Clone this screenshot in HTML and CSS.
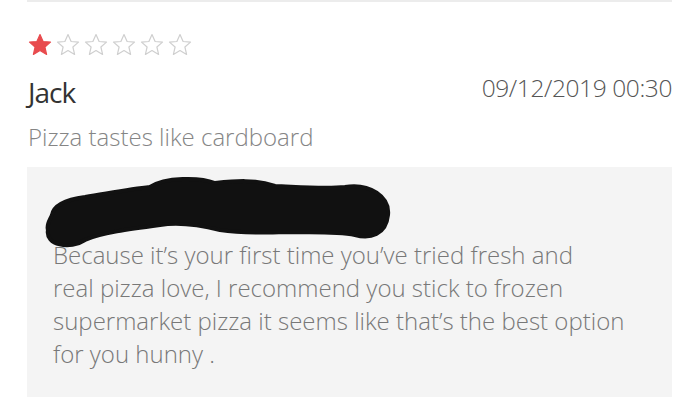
FILE: index.html
```html
<!DOCTYPE html>
<html>
<head>
<meta charset="utf-8">
<link rel="stylesheet" href="styles.css">
</head>
<body>
<div class="review">
  <div class="stars">
    <svg class="star on" viewBox="0 0 24 24"><path d="M12 1.5l3.1 7 7.4.6-5.6 4.9 1.7 7.4L12 17.5l-6.6 3.9 1.7-7.4L1.5 9.1l7.4-.6z"/></svg>
    <svg class="star" viewBox="0 0 24 24"><path d="M12 1.5l3.1 7 7.4.6-5.6 4.9 1.7 7.4L12 17.5l-6.6 3.9 1.7-7.4L1.5 9.1l7.4-.6z"/></svg>
    <svg class="star" viewBox="0 0 24 24"><path d="M12 1.5l3.1 7 7.4.6-5.6 4.9 1.7 7.4L12 17.5l-6.6 3.9 1.7-7.4L1.5 9.1l7.4-.6z"/></svg>
    <svg class="star" viewBox="0 0 24 24"><path d="M12 1.5l3.1 7 7.4.6-5.6 4.9 1.7 7.4L12 17.5l-6.6 3.9 1.7-7.4L1.5 9.1l7.4-.6z"/></svg>
    <svg class="star" viewBox="0 0 24 24"><path d="M12 1.5l3.1 7 7.4.6-5.6 4.9 1.7 7.4L12 17.5l-6.6 3.9 1.7-7.4L1.5 9.1l7.4-.6z"/></svg>
    <svg class="star" viewBox="0 0 24 24"><path d="M12 1.5l3.1 7 7.4.6-5.6 4.9 1.7 7.4L12 17.5l-6.6 3.9 1.7-7.4L1.5 9.1l7.4-.6z"/></svg>
  </div>
  <div class="meta">
    <span class="name">Jack</span>
    <span class="date">09/12/2019 00:30</span>
  </div>
  <p class="title">Pizza tastes like cardboard</p>
  <div class="reply">
    <svg class="redact" width="360" height="75" viewBox="0 0 360 75">
      <path d="M12 40 C14 28 30 24 45 22 C70 18 90 14 110 12 C125 2 160 2 175 8 C195 6 215 4 235 11 C260 12 285 14 305 12 C330 8 350 22 348 40 C346 60 330 64 315 60 C295 56 270 58 245 57 C220 58 200 58 180 55 C160 50 140 47 120 50 C90 54 60 58 45 65 C30 75 5 70 8 55 C6 50 10 45 12 40 Z"/>
    </svg>
    <p class="reply-text">Because it’s your first time you’ve tried fresh and<br>real pizza love, I recommend you stick to frozen<br>supermarket pizza it seems like that’s the best option<br>for you hunny .</p>
  </div>
</div>
</body>
</html>
```

FILE: styles.css
```css
html, body {
  margin: 0;
  padding: 0;
  background: #ffffff;
}
body {
  font-family: "Open Sans", "Liberation Sans", sans-serif;
  font-weight: 300;
}
.review {
  margin: 0 28px 0 27px;
  border-top: 2px solid #ececec;
  padding-top: 31px;
}
.stars {
  display: flex;
  gap: 4px;
  height: 24px;
  padding-left: 1px;
}
.star {
  width: 24px;
  height: 24px;
}
.star path {
  fill: none;
  stroke: #cfcfcf;
  stroke-width: 1.2;
  stroke-linejoin: round;
}
.star.on path {
  fill: #e84b4e;
  stroke: #e84b4e;
}
.meta {
  display: flex;
  justify-content: space-between;
  align-items: flex-start;
  margin-top: 19px;
  padding-left: 1px;
  height: 32px;
}
.name {
  font-size: 28px;
  line-height: 32px;
  color: #333333;
  font-weight: 400;
  letter-spacing: -1px;
}
.date {
  font-size: 24.5px;
  line-height: 32px;
  margin-top: -4px;
  color: #555555;
  letter-spacing: -0.4px;
}
.title {
  margin: 13px 0 0 1px;
  font-size: 24px;
  line-height: 32px;
  color: #858585;
}
.reply {
  margin-top: 14px;
  background: #f4f4f4;
  height: 230px;
  padding: 8px 20px 0 26px;
  box-sizing: border-box;
}
.redact {
  display: block;
  margin-left: -13px;
  height: 75px;
}
.redact path {
  fill: #111111;
  stroke: #111111;
  stroke-width: 4;
  stroke-linejoin: round;
}
.reply-text {
  margin: -12px 0 0 0;
  font-size: 24px;
  line-height: 33px;
  color: #787878;
}
```
